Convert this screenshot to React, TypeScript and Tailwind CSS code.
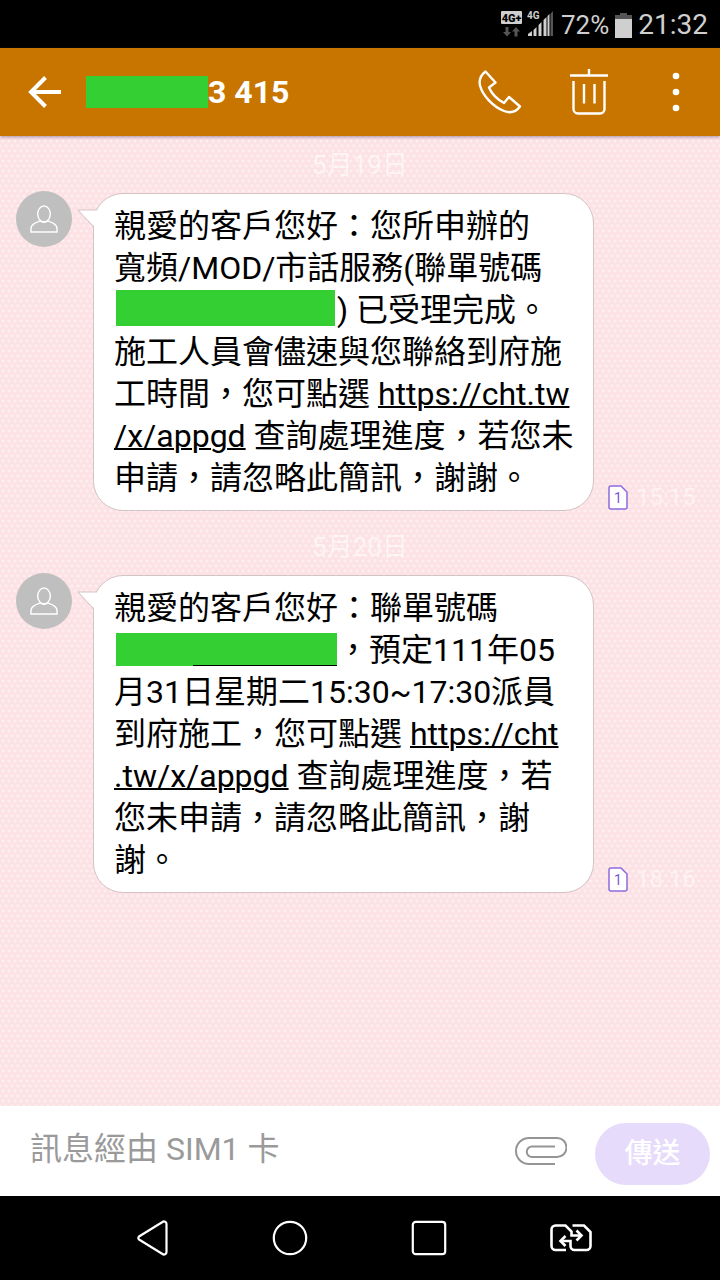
import type { ReactNode } from "react";

function StatusBar() {
  return (
    <div className="h-12 bg-black text-[#cfcfcf] flex items-center justify-end pt-0.5 pr-3 gap-1.5">
      <div className="flex items-center gap-1">
        {/* network type + traffic arrows */}
        <svg width="22" height="28" viewBox="0 0 22 28" aria-hidden="true">
          <rect x="0" y="0" width="21" height="13" rx="1" fill="#cfcfcf" />
          <text
            x="10.500"
            y="10.500"
            fontSize="11"
            fontWeight="900"
            fontFamily="Roboto, sans-serif"
            textAnchor="middle"
            fill="#000"
          >
            4G+
          </text>
          <path d="M4.500 16h3v5h2.500L6 25.500 2 21h2.500z" fill="#555" />
          <path d="M13.500 25.500h3v-5h2.500L15 16l-4 4.500h2.500z" fill="#555" />
        </svg>

        {/* signal */}
        <svg width="28" height="28" viewBox="0 0 28 28" aria-hidden="true">
          <text
            x="0"
            y="8"
            fontSize="10"
            fontWeight="700"
            fontFamily="Roboto, sans-serif"
            fill="#cfcfcf"
          >
            4G
          </text>
          <path d="M1 25v-2l4-3v5z" fill="#cfcfcf" />
          <path d="M6.500 25v-6l3-3v9zM11.500 25V14l3-3v14zM16.500 25V9l3-3v19z" fill="#cfcfcf" />
          <path d="M20.500 25V5l2-2v22z" fill="#cfcfcf" />
          <path d="M23.500 25V3l2.500-3v25z" fill="#555" />
        </svg>
      </div>

      <span className="text-[26px] leading-8">72%</span>

      <svg width="17" height="25" viewBox="0 0 17 25" aria-hidden="true">
        <path d="M5 0h7v2h5v5H0V2h5z" fill="#555" />
        <path d="M0 6h17v19H0z" fill="#cfcfcf" />
      </svg>

      <span className="text-[28px] leading-8">21:32</span>
    </div>
  );
}

function Header() {
  return (
    <header className="relative z-10 h-22 bg-[#c87500] text-white flex items-center pl-7 pr-6 shadow-[0_1px_3px_rgba(80,60,90,0.5)]">
      <button type="button" aria-label="返回">
        <svg width="34" height="34" viewBox="0 0 34 34" fill="none" stroke="currentColor" strokeWidth="4">
          <path d="M17.500 2.500L3 17l14.500 14.500M3 17h30" />
        </svg>
      </button>

      <h1 className="ml-6 flex flex-1 items-center text-[32px] leading-9 font-bold">
        <span className="w-[122px] h-8 bg-[#33cf33]" />
        3 415
      </h1>

      <div className="flex items-center">
        <button type="button" aria-label="撥號" className="mr-12">
          <svg
            width="44"
            height="44"
            viewBox="0 0 44 44"
            fill="none"
            stroke="currentColor"
            strokeWidth="2.400"
            strokeLinejoin="round"
          >
            <path d="M7.500 1.500L17.500 12.500L11 17.500C13.500 23.500 19.500 29.500 26 33L31 27L42 36.500C38 42 32.500 43.500 26 41C15 36.500 4.500 25.500 2 15.500C.8 10 3 5 7.500 1.500Z" />
          </svg>
        </button>
        <button type="button" aria-label="刪除" className="mr-12">
          <svg width="38" height="46" viewBox="0 0 38 46" fill="none" stroke="currentColor" strokeWidth="2.400">
            <path d="M0 6.500h38M19 0v6M3.500 12v28a4.500 4.500 0 0 0 4.500 4.500h22a4.500 4.500 0 0 0 4.500-4.500V12M14 15v19.500M24.500 15v19.500" />
          </svg>
        </button>
        <button type="button" aria-label="更多" className="px-4">
          <svg width="8" height="40" viewBox="0 0 8 40" fill="currentColor">
            <circle cx="4" cy="4" r="3.300" />
            <circle cx="4" cy="20" r="3.300" />
            <circle cx="4" cy="36" r="3.300" />
          </svg>
        </button>
      </div>
    </header>
  );
}

function DateLabel({ children }: { children: ReactNode }) {
  return (
    <p className="h-[55px] pt-1 flex items-center justify-center text-[26px] text-white/60">
      {children}
    </p>
  );
}

function SimIcon() {
  return (
    <svg width="20" height="25" viewBox="0 0 20 25" aria-hidden="true">
      <path
        d="M3 1h10l6 6v15a2 2 0 0 1-2 2H3a2 2 0 0 1-2-2V3a2 2 0 0 1 2-2z"
        fill="#fff"
        stroke="#8f6be0"
        strokeWidth="1.500"
      />
      <text
        x="10"
        y="18"
        fontSize="14"
        fontFamily="Roboto, sans-serif"
        textAnchor="middle"
        fill="#7d55d8"
      >
        1
      </text>
    </svg>
  );
}

function Message({ time, children }: { time: string; children: ReactNode }) {
  return (
    <div className="flex items-start pl-4 pb-[7px]">
      <div className="size-14 shrink-0 rounded-full bg-[#bfbfbf] flex items-center justify-center">
        <svg width="28" height="28" viewBox="0 0 28 28" fill="none" stroke="#fff" strokeWidth="1.400">
          <ellipse cx="14" cy="9" rx="6.300" ry="8" />
          <path d="M1 27v-3.500c0-4 4-5.500 9-7.500c2.500 1.500 5.500 1.500 8 0c5 2 9 3.500 9 7.500V27z" />
        </svg>
      </div>

      <div className="relative ml-[21px] mt-0.5 flex-1 rounded-[30px] border border-[#d3c3c7] bg-white py-[11px] pl-5 pr-4">
        {/* tail */}
        <svg
          className="absolute -left-[17px] top-[15px]"
          width="25"
          height="20"
          viewBox="0 0 25 20"
          aria-hidden="true"
        >
          <path d="M18 18L1 1h20l4 6v11z" fill="#fff" />
          <path d="M16.500 18L1 1h19" fill="none" stroke="#d3c3c7" />
        </svg>
        <p className="text-[32px] leading-[42px] text-black whitespace-nowrap">{children}</p>
      </div>

      <div className="w-[126px] shrink-0 self-end pl-[14px] flex items-center gap-2">
        <SimIcon />
        <time className="text-2xl leading-7 text-white/50">{time}</time>
      </div>
    </div>
  );
}

function Composer() {
  return (
    <form
      className="h-[90px] bg-white flex items-center pl-[30px] pr-[10px]"
      onSubmit={(e) => e.preventDefault()}
    >
      <input
        type="text"
        aria-label="訊息"
        placeholder="訊息經由 SIM1 卡"
        className="min-w-0 flex-1 pb-1 text-[32px] leading-10 text-black outline-none placeholder:text-[#9a9a9a]"
      />
      <button type="button" aria-label="附加檔案" className="mr-7">
        <svg width="52" height="28" viewBox="0 0 52 28" fill="none" stroke="#959595" strokeWidth="2">
          <path d="M40 27H14a13 13 0 0 1 0-26h28a9.500 9.500 0 0 1 0 19H17a5.250 5.250 0 0 1 0-10.500H40" />
        </svg>
      </button>
      <button
        type="submit"
        className="mt-1.5 h-[62px] w-[115px] rounded-full bg-[#e7dbfc] text-[28px] font-medium text-white"
      >
        傳送
      </button>
    </form>
  );
}

function NavBar() {
  return (
    <nav className="h-21 bg-black text-white flex items-center justify-center gap-[103px] pl-2">
      <button type="button" aria-label="返回">
        <svg width="32" height="36" viewBox="0 0 32 36" fill="none" stroke="currentColor" strokeWidth="2.200" strokeLinejoin="round">
          <path d="M2 16.500L25.500 2a2.500 2.500 0 0 1 4 2v28a2.500 2.500 0 0 1-4 2L2 19.500a2 2 0 0 1 0-3z" />
        </svg>
      </button>
      <button type="button" aria-label="主畫面">
        <svg width="36" height="36" viewBox="0 0 36 36" fill="none" stroke="currentColor" strokeWidth="2.200">
          <circle cx="18" cy="18" r="16.200" />
        </svg>
      </button>
      <button type="button" aria-label="最近使用">
        <svg width="36" height="36" viewBox="0 0 36 36" fill="none" stroke="currentColor" strokeWidth="2.200">
          <rect x="1.800" y="1.800" width="32.400" height="32.400" rx="3" />
        </svg>
      </button>
      <button type="button" aria-label="切換 SIM 卡">
        <svg width="42" height="28" viewBox="0 0 42 28" fill="none" stroke="currentColor" strokeWidth="2.600">
          <path d="M16 26H5.500A4 4 0 0 1 1.500 22V5.500A4 4 0 0 1 5.500 1.500H15.500L21.500 7.500V11.500H31" />
          <path d="M26.500 6.500l5 5-5 5M15.500 12l-5 5 5 5" />
          <path d="M11 17H20.500V22a4 4 0 0 0 4 4H36.500a4 4 0 0 0 4-4V8L34 1.500H22.500" />
        </svg>
      </button>
    </nav>
  );
}

export default function App() {
  return (
    <div
      lang="zh-Hant"
      className="min-h-screen flex flex-col font-[Roboto,'Noto_Sans_CJK_TC',sans-serif]"
    >
      <StatusBar />
      <Header />

      <main className="flex-1 bg-[#fce1e5] bg-[radial-gradient(circle,#fdeef0_1px,transparent_2px),radial-gradient(circle,#fdeef0_1px,transparent_2px)] bg-[length:6px_10px] bg-[position:0_0,3px_5px]">
        <DateLabel>5月19日</DateLabel>
        <Message time="15:15">
          親愛的客戶您好：您所申辦的
          <br />
          寬頻/MOD/市話服務(聯單號碼
          <br />
          <span className="inline-block mx-0.5 mt-px w-[219px] h-9 align-top bg-[#33cf33]" />) 已受理完成。
          <br />
          施工人員會儘速與您聯絡到府施
          <br />
          工時間，您可點選{" "}
          <a href="https://cht.tw/x/appgd" className="underline decoration-2">
            https://cht.tw
            <br />
            /x/appgd
          </a>{" "}
          查詢處理進度，若您未
          <br />
          申請，請忽略此簡訊，謝謝。
        </Message>

        <DateLabel>5月20日</DateLabel>
        <Message time="18:16">
          親愛的客戶您好：聯單號碼
          <br />
          <span className="inline-flex items-end justify-end ml-0.5 mt-1 w-[221px] h-[33px] align-top bg-[#33cf33]">
            <span className="h-px w-36 bg-black" />
          </span>
          ，預定111年05
          <br />
          月31日星期二15:30~17:30派員
          <br />
          到府施工，您可點選{" "}
          <a href="https://cht.tw/x/appgd" className="underline decoration-2">
            https://cht
            <br />
            .tw/x/appgd
          </a>{" "}
          查詢處理進度，若
          <br />
          您未申請，請忽略此簡訊，謝
          <br />
          謝。
        </Message>
      </main>

      <Composer />
      <NavBar />
    </div>
  );
}
